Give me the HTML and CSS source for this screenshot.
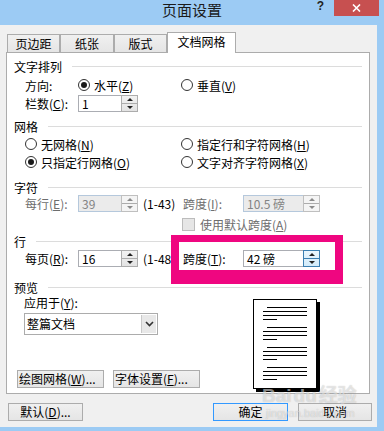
FILE: index.html
```html
<!DOCTYPE html>
<html>
<head>
    <title>页面设置</title>
    <link rel="stylesheet" href="styles.css">
</head>
<body>
<div class="titlebar">
    <div></div>
    <div class="title">页面设置</div>
    <div class="controls">
        <span class="help">?</span>
        <span class="close">
            <svg width="9" height="8" viewBox="0 0 9 8"><path d="M1 0.5 L8 7.5 M8 0.5 L1 7.5" stroke="#fff" stroke-width="1.6"/></svg>
        </span>
    </div>
</div>

<div class="client">
    <div class="tabs">
        <div class="tab w53">页边距</div>
        <div class="tab w54">纸张</div>
        <div class="tab w53">版式</div>
        <div class="tab active">文档网格</div>
    </div>

    <div class="panel">
        <div class="group-title">文字排列<span class="rule"></span></div>
        <div class="row mt2">
            <div class="cell">
                <span class="label">方向:</span>
                <span class="radio on"></span><span>水平(<u>Z</u>)</span>
            </div>
            <div class="cell">
                <span class="radio"></span><span>垂直(<u>V</u>)</span>
            </div>
        </div>
        <div class="row">
            <div class="cell">
                <span class="label">栏数(<u>C</u>):</span>
                <div class="spin w60"><span class="val">1</span><span class="spin-btn"><i class="up"></i><i class="down"></i></span></div>
            </div>
        </div>

        <div class="group-title mt6">网格<span class="rule"></span></div>
        <div class="row mt1">
            <div class="cell"><span class="radio"></span><span>无网格(<u>N</u>)</span></div>
            <div class="cell"><span class="radio"></span><span>指定行和字符网格(<u>H</u>)</span></div>
        </div>
        <div class="row">
            <div class="cell"><span class="radio on"></span><span>只指定行网格(<u>O</u>)</span></div>
            <div class="cell"><span class="radio"></span><span>文字对齐字符网格(<u>X</u>)</span></div>
        </div>

        <div class="group-title mt8">字符<span class="rule"></span></div>
        <div class="row up1">
            <div class="cell">
                <span class="label dim">每行(<u>E</u>):</span>
                <div class="spin w60 off"><span class="val">39</span><span class="spin-btn"><i class="up"></i><i class="down"></i></span></div>
                <span class="range">(1-43)</span>
            </div>
            <div class="cell">
                <span class="label-r dim">跨度(<u>I</u>):</span>
                <div class="spin w77 off"><span class="val">10.5 磅</span><span class="spin-btn"><i class="up"></i><i class="down"></i></span></div>
            </div>
        </div>
        <div class="row mt3">
            <div class="cell"></div>
            <div class="cell"><span class="check"></span><span class="dim">使用默认跨度(<u>A</u>)</span></div>
        </div>

        <div class="group-title">行<span class="rule"></span></div>
        <div class="row">
            <div class="cell">
                <span class="label">每页(<u>R</u>):</span>
                <div class="spin w60"><span class="val">16</span><span class="spin-btn"><i class="up"></i><i class="down"></i></span></div>
                <span class="range">(1-48)</span>
            </div>
            <div class="cell">
                <span class="label-r">跨度(<u>T</u>):</span>
                <div class="spin w77"><span class="val">42 磅</span><span class="spin-btn hot"><i class="up"></i><i class="down"></i></span></div>
            </div>
        </div>

        <div class="group-title mt12">预览<span class="rule"></span></div>
        <div class="lower">
            <div class="lower-left">
                <div class="field-label">应用于(<u>Y</u>):</div>
                <div class="select">
                    <span class="val">整篇文档</span>
                    <span class="arrow"><svg width="9" height="6" viewBox="0 0 9 6"><path d="M1 1 L4.5 4.5 L8 1" fill="none" stroke="#333" stroke-width="1.6"/></svg></span>
                </div>
                <div class="panel-btns">
                    <div class="btn left">绘图网格(<u>W</u>)...</div>
                    <div class="btn left">字体设置(<u>F</u>)...</div>
                </div>
            </div>
            <svg class="page-preview" width="67" height="93" viewBox="0 0 67 93">
                <rect x="64" y="3" width="3" height="90" fill="#000"/>
                <rect x="3" y="90" width="64" height="3" fill="#000"/>
                <rect x="0.5" y="0.5" width="63" height="89" fill="#fff" stroke="#000"/>
                <g stroke="#000" stroke-width="1">
                    <path d="M14 8.5H54 M10 12.5H54 M10 16.5H54 M10 20.5H24"/>
                    <path d="M14 28.5H54 M10 32.5H54 M10 36.5H54 M10 40.5H24"/>
                    <path d="M14 48.5H54 M10 52.5H54 M10 56.5H54 M10 60.5H24"/>
                    <path d="M14 68.5H54 M10 72.5H54 M10 76.5H54 M10 80.5H24"/>
                </g>
            </svg>
        </div>

        <div class="highlight"></div>
    </div>

    <div class="footer">
        <div class="btn w75">默认(<u>D</u>)...</div>
        <div class="btn w75 default">确定</div>
        <div class="btn w74">取消</div>
    </div>

    <div class="watermark">
        <div class="wm-logo">Bai<span class="wm-du">du</span>经验</div>
        <div class="wm-url">jingyan.baidu.com</div>
    </div>
</div>
</body>
</html>
```

FILE: styles.css
```css
* {
    box-sizing: border-box;
}
body {
    margin: 0;
    width: 384px;
    height: 431px;
    overflow: hidden;
    background-color: #9ccbf4;
    font-family: "Noto Sans CJK SC", sans-serif;
    font-size: 12px;
    color: #000;
}
u {
    text-decoration: underline;
}

/* title bar */
.titlebar {
    height: 25px;
    display: grid;
    grid-template-columns: 1fr auto 1fr;
}
.title {
    font-size: 15px;
    line-height: 20px;
    color: #1b1b1b;
}
.controls {
    display: flex;
    justify-content: flex-end;
    align-items: flex-start;
    padding-right: 5px;
}
.help {
    font-family: "Liberation Sans", sans-serif;
    font-weight: bold;
    font-size: 12px;
    line-height: 12px;
    color: #222;
    margin-right: 10px;
}
.close {
    width: 45px;
    height: 16px;
    background-color: #c75050;
    display: flex;
    align-items: center;
    justify-content: center;
}

/* client area */
.client {
    position: relative;
    width: 377px;
    height: 402px;
    background-color: #f0f0f0;
}
.tabs {
    display: flex;
    align-items: flex-end;
    height: 27px;
    padding-left: 7px;
}
.tab {
    height: 18px;
    border: 1px solid #acacac;
    border-bottom: none;
    background: linear-gradient(#f0f0f0, #e5e5e5);
    text-align: center;
    line-height: 17px;
}
.w53 { width: 53px; }
.w54 { width: 54px; }
.tab.active {
    position: relative;
    z-index: 1;
    width: 69px;
    height: 21px;
    margin-bottom: -1px;
    background: #fff;
    line-height: 18px;
}

.panel {
    position: relative;
    width: 364px;
    height: 342px;
    margin-left: 6px;
    padding: 5px 7px 0 7px;
    border: 1px solid #acacac;
    background-color: #fff;
    overflow: hidden;
}
.group-title {
    display: flex;
    align-items: center;
    height: 16px;
}
.rule {
    flex: 1;
    height: 1px;
    margin-left: 10px;
    background-color: #dcdcdc;
}
.mt1 { margin-top: 1px; }
.mt2 { margin-top: 2px; }
.mt3 { margin-top: 3px; }
.mt6 { margin-top: 6px; }
.mt8 { margin-top: 8px; }
.mt12 { margin-top: 12px; }
.up1 { margin-top: -1px; }

.row {
    display: grid;
    grid-template-columns: 156px 1fr;
    height: 18px;
    margin-left: 11px;
}
.cell {
    display: flex;
    align-items: center;
    white-space: nowrap;
}
.label {
    width: 53px;
}
.label-r {
    width: 62px;
    padding-left: 2px;
}
.dim {
    color: #6d6d6d;
}
.range {
    margin-left: 5px;
}

.radio {
    flex: none;
    width: 12px;
    height: 12px;
    margin-right: 4px;
    border: 1px solid #333;
    border-radius: 50%;
    background: #fff;
    display: flex;
    align-items: center;
    justify-content: center;
}
.radio.on::after {
    content: "";
    width: 6px;
    height: 6px;
    border-radius: 50%;
    background: #1a1a1a;
}
.check {
    flex: none;
    width: 13px;
    height: 13px;
    margin: 0 5px 0 1px;
    border: 1px solid #bcbcbc;
    background: #e6e6e6;
}

/* spinners */
.spin {
    display: flex;
    height: 17px;
    border: 1px solid #abadb3;
    background: #fff;
}
.w60 { width: 60px; }
.w77 { width: 77px; }
.spin .val {
    flex: 1;
    padding-left: 3px;
    line-height: 15px;
}
.spin-btn {
    width: 17px;
    display: flex;
    flex-direction: column;
    border: 1px solid #acacac;
    margin: -1px -1px -1px 0;
    background: linear-gradient(#f2f2f2, #e3e3e3);
}
.spin-btn i {
    flex: 1;
    display: flex;
    align-items: center;
    justify-content: center;
}
.spin-btn i::after {
    content: "";
    border-left: 3px solid transparent;
    border-right: 3px solid transparent;
}
.spin-btn .up {
    border-bottom: 1px solid #acacac;
}
.spin-btn .up::after {
    border-bottom: 3px solid #222;
}
.spin-btn .down::after {
    border-top: 3px solid #222;
}
.spin-btn.hot {
    border-color: #3c7fb1;
    background: linear-gradient(#eaf6fd, #d2ebfa);
}
.spin-btn.hot .up {
    border-bottom-color: #3c7fb1;
}
.spin.off {
    border-color: #b5c8dc;
    background: #ebebeb;
    color: #838383;
}
.spin.off .spin-btn {
    border-color: #bfbfbf;
    background: #f4f4f4;
}
.spin.off .spin-btn .up::after {
    border-bottom-color: #8a8a8a;
}
.spin.off .spin-btn .down::after {
    border-top-color: #8a8a8a;
}

/* preview area */
.lower {
    display: flex;
}
.lower-left {
    width: 239px;
}
.field-label {
    height: 16px;
    line-height: 16px;
    margin-left: 10px;
}
.select {
    display: flex;
    width: 134px;
    height: 22px;
    margin: 2px 0 0 10px;
    border: 1px solid #acacac;
    background: #fff;
}
.select .val {
    flex: 1;
    padding-left: 2px;
    line-height: 20px;
}
.select .arrow {
    width: 15px;
    margin: 1px;
    border-left: 1px solid #c9c9c9;
    background: #e8e8e8;
    display: flex;
    align-items: center;
    justify-content: center;
}
.panel-btns {
    display: flex;
    gap: 9px;
    margin: 35px 0 0 3px;
}
.page-preview {
    margin-top: 4px;
}

.btn {
    height: 18px;
    border: 1px solid #acacac;
    background: linear-gradient(#f0f0f0, #e5e5e5);
    display: flex;
    align-items: center;
    justify-content: center;
    white-space: nowrap;
    overflow: hidden;
    line-height: 16px;
}
.btn.left {
    width: 87px;
    justify-content: flex-start;
    padding-left: 1px;
}
.w74 { width: 74px; }
.w75 { width: 75px; }
.btn.default {
    border-color: #3399ff;
    margin-left: auto;
}

.footer {
    display: flex;
    gap: 10px;
    height: 18px;
    margin-top: 9px;
    padding: 0 5px 0 8px;
}

/* annotation drawn over the dialog */
.highlight {
    position: absolute;
    left: 164px;
    top: 182px;
    width: 172px;
    height: 49px;
    border-style: solid;
    border-color: #ef0680;
    border-width: 7px 8px 14px 8px;
}

.watermark {
    position: absolute;
    left: 262px;
    top: 360px;
    color: rgba(255, 255, 255, 0.55);
    text-shadow: 0 0 1px rgba(0, 0, 0, 0.25);
    pointer-events: none;
}
.wm-logo {
    font-family: "Liberation Sans", "Noto Sans CJK SC", sans-serif;
    font-weight: bold;
    font-size: 19px;
    line-height: 22px;
}
.wm-du {
    margin: 0 2px;
}
.wm-url {
    font-family: "Liberation Sans", sans-serif;
    font-size: 11px;
    line-height: 12px;
    margin-left: 4px;
}
```
